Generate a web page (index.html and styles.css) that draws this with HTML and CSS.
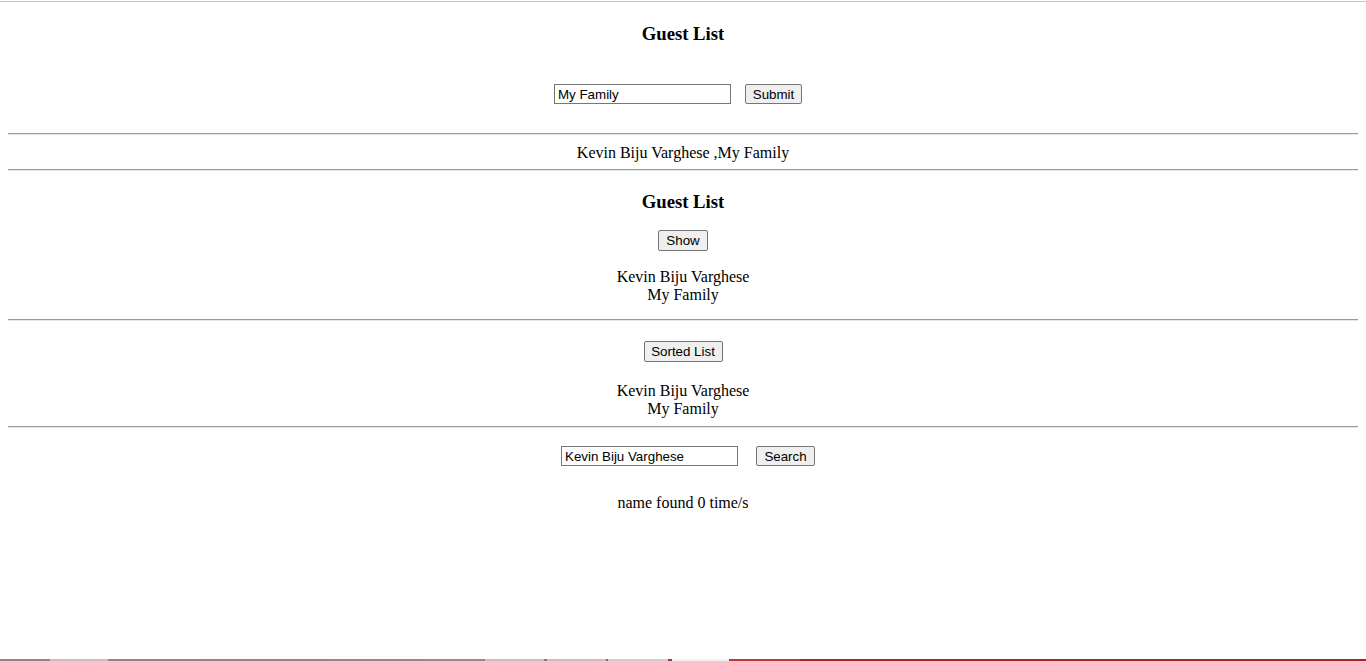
FILE: index.html
```html
<!DOCTYPE html>
<html>
<head>
<meta charset="utf-8">
<title>Guest List</title>
<link rel="stylesheet" href="styles.css">
</head>
<body>
<div class="topline"></div>
<h3 class="title first">Guest List</h3>
<div class="row row-add">
  <input class="field" type="text" value="My Family">
  <button class="btn btn-submit">Submit</button>
</div>
<hr class="rule rule-1">
<div class="joined">Kevin Biju Varghese ,My Family</div>
<hr class="rule rule-2">
<h3 class="title second">Guest List</h3>
<div class="center"><button class="btn btn-show">Show</button></div>
<p class="names names-show">Kevin Biju Varghese<br>My Family</p>
<hr class="rule rule-3">
<div class="center"><button class="btn btn-sort">Sorted List</button></div>
<p class="names names-sort">Kevin Biju Varghese<br>My Family</p>
<hr class="rule rule-4">
<div class="row row-search">
  <input class="field" type="text" value="Kevin Biju Varghese">
  <button class="btn btn-search">Search</button>
</div>
<p class="result">name found 0 time/s</p>
<div class="taskbar">
  <span class="seg seg-a"></span>
  <span class="seg seg-b"></span>
  <span class="seg seg-c"></span>
  <span class="seg seg-d"></span>
  <span class="seg seg-e"></span>
  <span class="seg seg-f"></span>
</div>
</body>
</html>
```
FILE: styles.css
```css
html, body {
  margin: 0;
  padding: 0;
  background: #ffffff;
}
body {
  font-family: "Liberation Serif", "Times New Roman", serif;
  font-size: 16px;
  line-height: 18px;
  color: #000;
  min-height: 661px;
  position: relative;
  overflow: hidden;
}
.topline {
  margin-top: 1px;
  height: 1px;
  background: #c3c3c3;
}
.title {
  font-size: 18.72px;
  font-weight: bold;
  line-height: 22px;
  text-align: center;
  margin: 0 8px;
}
.first { margin-top: 21px; }
.second { margin-top: 20px; }
.row {
  display: flex;
  justify-content: center;
  align-items: center;
  margin: 0 8px;
}
.row-add {
  margin-top: 39px;
  gap: 14px;
  padding-right: 10px;
}
.row-search {
  margin-top: 18px;
  gap: 18px;
  padding-left: 10px;
}
.field {
  box-sizing: border-box;
  width: 177px;
  height: 20px;
  margin: 0;
  padding: 1px 2px 1px 3px;
  border: 1px solid #767676;
  border-radius: 0;
  font-family: "Liberation Sans", Arial, sans-serif;
  font-size: 13.33px;
  color: #000;
  background: #fff;
}
.btn {
  box-sizing: border-box;
  height: 20px;
  margin: 0;
  padding: 1px 6px 0;
  border: 1px solid #767676;
  border-radius: 2px;
  background: #efefef;
  font-family: "Liberation Sans", Arial, sans-serif;
  font-size: 13.33px;
  color: #000;
  line-height: 16px;
}
.btn-submit { width: 57px; }
.btn-search { width: 59px; }
.btn-show { width: 50px; height: 21px; }
.btn-sort { width: 79px; height: 21px; }
.center {
  display: flex;
  justify-content: center;
  margin: 17px 8px 0;
}
.rule {
  height: 0;
  margin: 0 8px;
  border: 0;
  border-top: 1px solid #9a9a9a;
  border-bottom: 1px solid #e6e6e6;
}
.rule-1 { margin-top: 29px; }
.rule-3 { margin-top: 15px; }
.rule-4 { margin-top: 8px; }
.joined {
  text-align: center;
  margin: 8px 8px 7px;
  padding-top: 1px;
}
.names {
  text-align: center;
  margin: 16px 8px 0;
  padding-top: 1px;
}
.names-sort { margin-top: 19px; }
.rule-3 + .center { margin-top: 20px; }
.result {
  text-align: center;
  margin: 28px 8px 0;
}
.taskbar {
  position: absolute;
  left: 0;
  right: 0;
  top: 659px;
  height: 2px;
  background: linear-gradient(to right, #9b8287 0, #9e8489 485px, #a3262b 735px, #a1262a 100%);
}
.seg {
  position: absolute;
  top: 0;
  height: 2px;
  background: #cdbcc0;
}
.seg-a { left: 50px; width: 58px; }
.seg-b { left: 485px; width: 59px; }
.seg-c { left: 547px; width: 59px; }
.seg-d { left: 608px; width: 60px; background: #d9c9cc; }
.seg-e { left: 671px; width: 57px; background: #f4f0f0; border-left: 1px solid #555; border-right: 1px solid #555; }
.seg-f { left: 730px; width: 70px; background: #b83a3e; }
```
